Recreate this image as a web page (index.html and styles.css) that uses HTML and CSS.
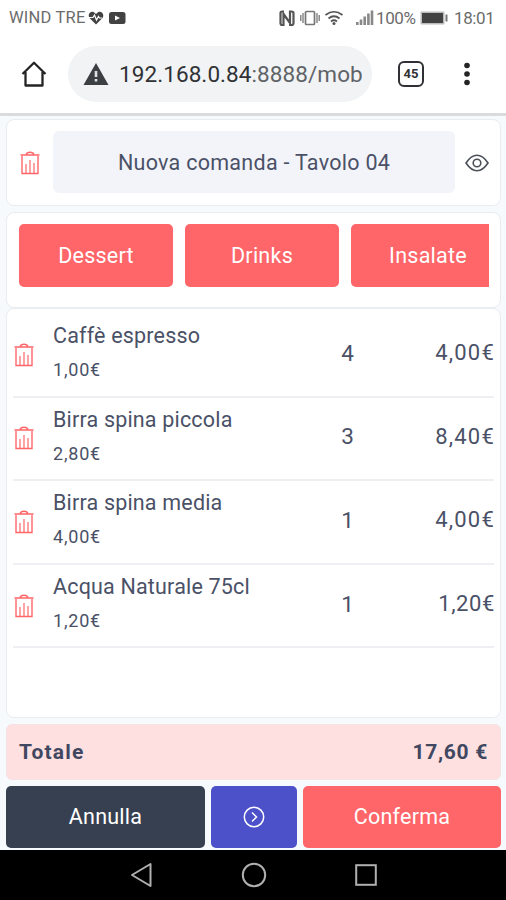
FILE: index.html
```html
<!DOCTYPE html>
<html lang="it">
<head>
<meta charset="utf-8">
<title>Nuova comanda</title>
<link rel="stylesheet" href="styles.css">
</head>
<body>
<svg width="0" height="0" class="defs">
  <symbol id="trash" viewBox="0 0 20 24">
    <path d="M.5 4H19.500M6 4C6.500 2 8 1.200 10 1.200S13.500 2 14 4M2 5V22.500H18V5" fill="none" stroke="currentColor" stroke-width="1.400"/>
    <path d="M6 13V22M10 9V22M14 12V22" fill="none" stroke="currentColor" stroke-width="1.200"/>
  </symbol>
</svg>
<div class="status">
  <span class="carrier">WIND TRE</span>
  <svg class="notif" width="38" height="16" viewBox="0 0 38 16">
    <path d="M8 14.500L1.500 8C-1 4 3 .5 6 2.200L8 4L10 2.200C13 .5 17 4 14.500 8Z" fill="#424242"/>
    <path d="M1 7.500H5L6.500 5L8.500 10L10.500 6.500L11.500 8H14" fill="none" stroke="#fff" stroke-width="1.200"/>
    <rect x="21" y="2" width="16.500" height="12" rx="2.500" fill="#424242"/>
    <path d="M27 5.500L32 8L27 10.500Z" fill="#fff"/>
  </svg>
  <svg class="signals" width="96" height="18" viewBox="0 0 96 18">
    <g fill="none" stroke="#555">
      <path d="M5 2.500H3Q1.500 2.500 1.500 4V14Q1.500 16 3 16H4.500V5L11 14V2.500H12.500Q14.500 2.500 14.500 4V14Q14.500 16 12.500 16H10" stroke-width="2.200"/>
      <rect x="26.500" y="2.500" width="9" height="13" rx="1" stroke="#777" stroke-width="1.700"/>
      <path d="M24 4V14M21.800 6V12M38 4V14M40.200 6V12" stroke="#777" stroke-width="1.300"/>
      <path d="M46.500 6Q55 -.5 63.500 6M49.500 9.500Q55 5 60.500 9.500M52 12.500Q55 10 58 12.500" stroke-width="1.700"/>
      <path d="M78.300 16V13M82 16V10.500M85.700 16V7.500M89.400 16V4.500M93 16V1.500" stroke="#888" stroke-width="2.600"/>
    </g>
    <circle cx="55" cy="14.600" r="1.500" fill="#555"/>
  </svg>
  <span class="percent">100%</span>
  <svg class="battery" width="28" height="14" viewBox="0 0 28 14"><rect x=".5" y=".5" width="24" height="13" rx="1" fill="#bbb"/><rect x="2" y="2" width="21" height="10" fill="#424242"/><rect x="25.500" y="3.500" width="2" height="7" fill="#777"/></svg>
  <span class="clock">18:01</span>
</div>
<div class="browser">
  <svg class="home" width="26" height="27" viewBox="0 0 26 27"><path d="M1.500 13L13 1.800L24.500 13M4.500 11V24.500H21.500V11" fill="none" stroke="#242424" stroke-width="2.300" stroke-linejoin="round"/></svg>
  <div class="address">
    <svg width="26" height="22" viewBox="0 0 26 22"><path d="M13 0L25.500 22H.5Z" fill="#3c4043"/><path d="M13 8V14M13 16V18.500" stroke="#dfe1e3" stroke-width="2.600"/></svg>
    <span class="url"><b>192.168.0.84</b>:8888/mob</span>
  </div>
  <span class="tabs">45</span>
  <svg class="more" width="6" height="24" viewBox="0 0 6 24"><g fill="#242424"><circle cx="3" cy="3.500" r="2.800"/><circle cx="3" cy="12" r="2.800"/><circle cx="3" cy="20.500" r="2.800"/></g></svg>
</div>
<main>
  <section class="card head">
    <svg class="trash"><use href="#trash"/></svg>
    <div class="title"><span>Nuova comanda - Tavolo 04</span></div>
    <svg class="eye" width="24" height="18" viewBox="0 0 24 18"><g fill="none" stroke="#4b4f58" stroke-width="1.600"><path d="M1 9C4.500 3.800 8 1.300 12 1.300S19.500 3.800 23 9C19.500 14.200 16 16.700 12 16.700S4.500 14.200 1 9Z"/><circle cx="12" cy="9" r="3.800"/></g></svg>
  </section>
  <section class="card cats"><div class="strip">
    <button class="cat">Dessert</button><button class="cat">Drinks</button><button class="cat">Insalate</button>
  </div></section>
  <section class="card list">
    <div class="row"><svg class="trash"><use href="#trash"/></svg><div class="item"><span class="name">Caffè espresso</span><span class="unit">1,00€</span></div><span class="qty">4</span><span class="sum">4,00€</span></div>
    <div class="row"><svg class="trash"><use href="#trash"/></svg><div class="item"><span class="name">Birra spina piccola</span><span class="unit">2,80€</span></div><span class="qty">3</span><span class="sum">8,40€</span></div>
    <div class="row"><svg class="trash"><use href="#trash"/></svg><div class="item"><span class="name">Birra spina media</span><span class="unit">4,00€</span></div><span class="qty">1</span><span class="sum">4,00€</span></div>
    <div class="row"><svg class="trash"><use href="#trash"/></svg><div class="item"><span class="name">Acqua Naturale 75cl</span><span class="unit">1,20€</span></div><span class="qty">1</span><span class="sum narrow">1,20€</span></div>
  </section>
  <section class="total"><span class="label">Totale</span><span class="amount">17,60 €</span></section>
  <div class="actions">
    <button class="cancel">Annulla</button>
    <button class="next"><svg width="22" height="22" viewBox="0 0 22 22"><g fill="none" stroke="#fff" stroke-width="1.500"><circle cx="11" cy="11" r="9.700"/><path d="M9 6.500L13.500 11L9 15.500"/></g></svg></button>
    <button class="confirm">Conferma</button>
  </div>
</main>
<nav>
  <svg width="22" height="26" viewBox="0 0 22 26"><path d="M20.500 2V24L2 13Z" fill="none" stroke="#b0b0b0" stroke-width="2" stroke-linejoin="round"/></svg>
  <svg width="26" height="26" viewBox="0 0 26 26"><circle cx="13" cy="13" r="11.200" fill="none" stroke="#b0b0b0" stroke-width="2"/></svg>
  <svg width="22" height="22" viewBox="0 0 22 22"><rect x="1.200" y="1.200" width="19.600" height="19.600" fill="none" stroke="#b0b0b0" stroke-width="2"/></svg>
</nav>
</body>
</html>
```
FILE: styles.css
```css
* { box-sizing: border-box; }
body { margin: 0; width: 506px; height: 900px; overflow: hidden; display: flex; flex-direction: column; font-family: Roboto, "Liberation Sans", sans-serif; color: #4a5167; background: #fff; }
.defs { display: none; }
.status { height: 35px; flex: none; display: flex; align-items: center; padding-left: 9px; font-size: 17px; color: #6c6c6c; }
.carrier { width: 79px; font-size: 16.5px; white-space: nowrap; letter-spacing: .2px; }
.signals { margin-left: 153px; }
.percent { width: 42px; margin-left: 1px; letter-spacing: -.4px; }
.battery { margin-left: 2px; }
.clock { margin-left: 6px; white-space: nowrap; letter-spacing: -.4px; }
.browser { height: 78px; flex: none; display: flex; align-items: center; padding: 0 0 0 21px; }
.address { margin-left: 21px; width: 304px; height: 56px; border-radius: 28px; background: #f1f3f4; display: flex; align-items: center; padding-left: 15px; }
.url { margin-left: 10px; font-size: 22.5px; color: #5f6368; white-space: nowrap; letter-spacing: .08px; }
.url b { font-weight: 400; color: #303134; }
.tabs { margin-left: 26px; width: 26px; height: 26px; border: 2.5px solid #303134; border-radius: 6px; font-size: 13px; line-height: 21px; text-align: center; font-weight: 700; color: #303134; }
.more { margin-left: 40px; }
main { height: 737px; flex: none; border-top: 3px solid #d9dbdd; background: #f7fafc; padding: 3px 5px 0 6px; display: flex; flex-direction: column; }
.card { background: #fff; border: 1.5px solid #e9edf0; border-radius: 8px; flex: none; }
.head { height: 87px; display: flex; align-items: center; padding-left: 13px; }
.trash { width: 20px; height: 24px; color: #ff6669; flex: none; }
.title { margin: 0 0 1px 13px; width: 402px; height: 62px; border-radius: 6px; background: #f3f4f9; display: flex; align-items: center; justify-content: center; font-size: 21.5px; white-space: nowrap; letter-spacing: .28px; }
.eye { margin-left: 10px; }
.cats { margin-top: 6px; height: 96px; padding: 11px 11px 11px 12px; }
.strip { display: flex; gap: 12px; overflow: hidden; }
button { border: 0; padding: 0; font: inherit; color: #fff; border-radius: 5px; font-size: 21.5px; letter-spacing: .25px; }
.cat { width: 154px; height: 63px; flex: none; background: #ff6669; }
.list { height: 410px; padding: 5px 6px; }
.row { height: 83.6px; border-bottom: 2px solid #edeff2; display: flex; align-items: center; padding-left: 1px; }
.item { margin: 0 0 5px 19px; width: 266px; display: flex; flex-direction: column; }
.name { font-size: 21.5px; line-height: 28px; white-space: nowrap; letter-spacing: .18px; }
.unit { font-size: 18px; line-height: 24px; margin-top: 8px; letter-spacing: .8px; }
.qty { width: 35px; margin-bottom: 4px; text-align: right; font-size: 22.5px; }
.sum { margin: 0 -1px 4px auto; font-size: 22px; letter-spacing: 1.2px; }
.narrow { letter-spacing: .6px; }
.total { height: 56px; flex: none; margin-top: 6px; background: #ffe0e1; border: 1px solid #f5e2e4; border-radius: 6px; display: flex; justify-content: space-between; align-items: center; padding: 0 12px; font-size: 21px; font-weight: 700; color: #3f4860; }
.label { letter-spacing: 1.2px; }
.amount { letter-spacing: .7px; }
.label, .amount { margin-bottom: 1px; }
.actions { display: flex; gap: 6px; margin-top: 6px; }
.actions button { height: 62px; padding-bottom: 1px; }
.cancel { width: 199px; background: #374050; }
.next { width: 86px; background: #4c51c9; display: flex; align-items: center; justify-content: center; }
.confirm { flex: 1; background: #ff6669; }
nav { height: 50px; flex: none; background: #000; display: flex; align-items: center; padding-left: 130px; gap: 88.5px; }
```
